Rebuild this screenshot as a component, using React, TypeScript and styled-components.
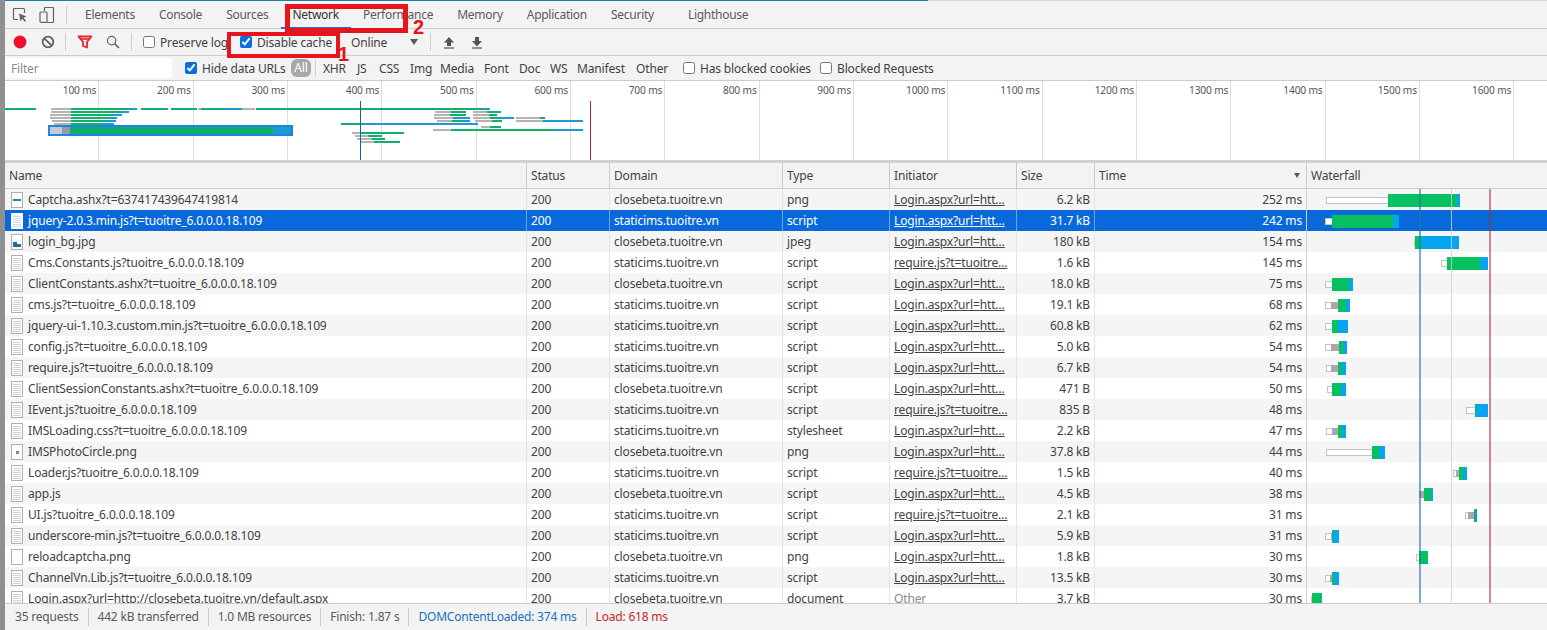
import React from "react";
import styled, { createGlobalStyle } from "styled-components";

const GlobalStyle = createGlobalStyle`
  html, body {
    margin: 0;
    padding: 0;
    height: 630px;
    overflow: hidden;
    background: #fff;
  }
  * {
    box-sizing: border-box;
  }
`;

const Page = styled.div`
  position: relative;
  width: 1547px;
  height: 630px;
  display: flex;
  flex-direction: column;
  overflow: hidden;
  background: #f3f3f3;
  border-left: 5px solid #909090;
  font-family: "Noto Sans", "Liberation Sans", sans-serif;
  font-size: 12px;
  letter-spacing: -0.16px;
  color: #3f4246;
`;

const TopLine = styled.div`
  height: 1px;
  margin-left: -5px;
  background: linear-gradient(to right, #1d7ea6 928px, #d8d8d8 928px);
`;

const TabBar = styled.div`
  height: 28px;
  display: flex;
  align-items: stretch;
  border-bottom: 1px solid #cccccc;
  padding-left: 2px;
`;

const IconSlot = styled.div<{ $w?: number; $l?: number }>`
  flex: 0 0 ${(p) => p.$w || 28}px;
  margin-left: ${(p) => p.$l || 0}px;
  display: flex;
  align-items: center;
  justify-content: center;
`;

const VDivider = styled.div<{ $h?: number; $l?: number; $r?: number }>`
  flex: 0 0 1px;
  align-self: center;
  height: ${(p) => p.$h || 18}px;
  background: #cfcfcf;
  margin-left: ${(p) => p.$l || 0}px;
  margin-right: ${(p) => p.$r || 0}px;
`;

const Tab = styled.div<{ $active?: boolean; $extra?: number }>`
  display: flex;
  align-items: center;
  padding: 1px 12px 0;
  margin-left: ${(p) => p.$extra || 0}px;
  letter-spacing: -0.27px;
  color: ${(p) => (p.$active ? "#333" : "#5a5a5a")};
  border-bottom: 2px solid ${(p) => (p.$active ? "#1a73e8" : "transparent")};
  margin-bottom: -1px;
`;

const Toolbar = styled.div`
  height: 27px;
  display: flex;
  align-items: center;
  border-bottom: 1px solid #cccccc;
  padding-left: 1px;
`;

const FilterBar = styled.div`
  height: 25px;
  display: flex;
  align-items: center;
  border-bottom: 1px solid #cccccc;
`;

const FilterInput = styled.div`
  flex: 0 0 167px;
  height: 20px;
  background: #fff;
  color: #8a8a8a;
  padding-left: 6px;
  line-height: 21px;
  margin-right: 13px;
`;

const Check = styled.input.attrs({ type: "checkbox", readOnly: true })`
  width: 12px;
  height: 12px;
  margin: 0 5px 0 0;
  accent-color: #0a6fdc;
  flex: none;
`;

const CheckLabel = styled.label<{ $w?: number }>`
  display: flex;
  align-items: center;
  white-space: nowrap;
  width: ${(p) => (p.$w ? `${p.$w}px` : "auto")};
`;

const AllPill = styled.span`
  background: #a8a8a8;
  color: #fff;
  border-radius: 6px;
  width: 20px;
  height: 18px;
  line-height: 18px;
  text-align: center;
  margin-left: 7px;
`;

const TypeButton = styled.span<{ $w: number }>`
  width: ${(p) => p.$w}px;
  white-space: nowrap;
`;

const Throttle = styled.div`
  width: 79px;
  margin-left: 20px;
  display: flex;
  align-items: center;
  justify-content: space-between;
  padding-right: 12px;
`;

const Caret = styled.span`
  width: 0;
  height: 0;
  border-left: 4px solid transparent;
  border-right: 4px solid transparent;
  border-top: 6px solid #5a5a5a;
`;

const Overview = styled.div`
  position: relative;
  height: 82px;
  display: flex;
  background: #fff;
  border-bottom: 3px solid #d0d0d0;
`;

const OverviewTick = styled.div`
  flex: 0 0 94.33px;
  height: 79px;
  border-right: 1px solid #dddddd;
  text-align: right;
  padding: 2px 2px 0 0;
  font-size: 10.2px;
  line-height: 15px;
  color: #555;
  white-space: nowrap;
`;

const OverviewChart = styled.svg`
  position: absolute;
  left: 0;
  top: 0;
`;

const COLUMNS = "522px 83px 173px 107px 127px 78px 212px 1fr";

const HeaderRow = styled.div`
  display: grid;
  grid-template-columns: ${COLUMNS};
  height: 26px;
  background: #f3f3f3;
  border-bottom: 1px solid #cccccc;
`;

const HeaderCell = styled.div`
  display: flex;
  align-items: center;
  justify-content: space-between;
  padding: 0 6px 0 4px;
  border-right: 1px solid #cccccc;
  white-space: nowrap;
  &:last-child {
    border-right: 0;
  }
`;

const SortCaret = styled(Caret)`
  border-left-width: 3.5px;
  border-right-width: 3.5px;
  border-top-width: 5px;
`;

const Table = styled.div`
  flex: 1;
  min-height: 0;
  overflow: hidden;
  background: #fff;
  border-bottom: 1px solid #cccccc;
`;

const Row = styled.div<{ $selected?: boolean; $striped?: boolean }>`
  display: grid;
  grid-template-columns: ${COLUMNS};
  height: 21px;
  line-height: 21px;
  background: ${(p) =>
    p.$selected ? "#0a69da" : p.$striped ? "#f5f5f5" : "#ffffff"};
  color: ${(p) => (p.$selected ? "#ffffff" : "#3f4246")};
`;

const Cell = styled.div<{ $right?: boolean; $selected?: boolean }>`
  padding: 0 4px;
  overflow: hidden;
  white-space: nowrap;
  text-overflow: ellipsis;
  text-align: ${(p) => (p.$right ? "right" : "left")};
  border-right: 1px solid ${(p) => (p.$selected ? "#ffffff66" : "#e4e4e4")};
`;

const NameCell = styled(Cell)`
  display: flex;
  align-items: center;
  gap: 5px;
  padding-left: 6px;
`;

const InitiatorLink = styled.span<{ $plain?: boolean }>`
  text-decoration: ${(p) => (p.$plain ? "none" : "underline")};
  color: ${(p) => (p.$plain ? "#8a8a8a" : "inherit")};
`;

const WaterfallCell = styled.div`
  border-left: 1px solid #d0d0d0;
  margin-left: -1px;
  height: 21px;
`;

const StatusBar = styled.div`
  flex: 0 0 26px;
  display: flex;
  align-items: center;
  padding-left: 1px;
  letter-spacing: -0.2px;
  color: #5a5a5a;
`;

const StatusItem = styled.span<{ $tone?: "blue" | "red" }>`
  padding: 0 9px;
  border-right: 1px solid #cccccc;
  line-height: 18px;
  color: ${(p) =>
    p.$tone === "blue" ? "#1a6fc0" : p.$tone === "red" ? "#c62828" : "inherit"};
  &:last-child {
    border-right: 0;
  }
`;

// the red marks someone drew on top of the screenshot
const MarkBox = styled.div<{ $x: number; $y: number; $w: number; $h: number; $t: number }>`
  position: absolute;
  left: ${(p) => p.$x - 5}px;
  top: ${(p) => p.$y}px;
  width: ${(p) => p.$w}px;
  height: ${(p) => p.$h}px;
  border: ${(p) => p.$t}px solid #e5141d;
`;

const MarkDigit = styled.span<{ $x: number; $y: number }>`
  position: absolute;
  left: ${(p) => p.$x - 5}px;
  top: ${(p) => p.$y}px;
  font-family: "Liberation Sans", sans-serif;
  font-weight: 700;
  font-size: 20px;
  line-height: 21px;
  letter-spacing: 0;
  color: #e5141d;
`;

const InspectIcon = () => (
  <svg width="16" height="16" viewBox="0 0 16 16">
    <path d="M6 12.5H2.5a1 1 0 0 1-1-1v-9a1 1 0 0 1 1-1h9a1 1 0 0 1 1 1V6" fill="none" stroke="#5f6368" strokeWidth="1.2" />
    <path d="M7 6.5l7.5 3-3 1.2 2.6 3-1.3 1.1-2.5-3-1.8 2.4z" fill="#5f6368" />
  </svg>
);

const DeviceIcon = () => (
  <svg width="16" height="16" viewBox="0 0 16 16">
    <path d="M5.5 4V1.5a1 1 0 0 1 1-1h7a1 1 0 0 1 1 1v13a1 1 0 0 1-1 1H8" fill="none" stroke="#5f6368" strokeWidth="1.2" />
    <rect x="1" y="5" width="7" height="10.4" rx="1" fill="none" stroke="#5f6368" strokeWidth="1.2" />
  </svg>
);

const RecordIcon = () => (
  <svg width="16" height="16" viewBox="0 0 16 16">
    <circle cx="8" cy="8" r="6.4" fill="#ef0f2c" />
  </svg>
);

const ClearIcon = () => (
  <svg width="14" height="14" viewBox="0 0 14 14">
    <circle cx="7" cy="7" r="5.3" fill="none" stroke="#5f6368" strokeWidth="1.8" />
    <path d="M3.3 3.3l7.4 7.4" stroke="#5f6368" strokeWidth="1.8" />
  </svg>
);

const FunnelIcon = () => (
  <svg width="16" height="14" viewBox="0 0 16 14">
    <path d="M1.5 1.5h13L10 7v5.5L6 11V7z" fill="none" stroke="#e8232f" strokeWidth="1.8" strokeLinejoin="round" />
    <path d="M4 4h8" stroke="#e8232f" strokeWidth="1.6" />
  </svg>
);

const SearchIcon = () => (
  <svg width="14" height="14" viewBox="0 0 14 14">
    <circle cx="5.6" cy="5.6" r="4.2" fill="none" stroke="#666" strokeWidth="1.2" />
    <path d="M8.6 8.6l4.4 4.4" stroke="#666" strokeWidth="1.6" />
  </svg>
);

const UploadIcon = () => (
  <svg width="12" height="13" viewBox="0 0 12 13">
    <path d="M6 1l5 5.5H8v3.5H4V6.5H1z" fill="#555" />
    <rect x="1" y="11.4" width="10" height="1.2" fill="#555" />
  </svg>
);

const DownloadIcon = () => (
  <svg width="12" height="13" viewBox="0 0 12 13">
    <path d="M4 1h4v4h3l-5 5.5L1 5h3z" fill="#555" />
    <rect x="1" y="11.4" width="10" height="1.2" fill="#555" />
  </svg>
);

type FileKind = "doc" | "captcha" | "image" | "blank" | "dot";

const FileIcon = ({ kind, selected }: { kind: FileKind; selected?: boolean }) => (
  <svg width="12" height="16" viewBox="0 0 12 16" shapeRendering="crispEdges" style={{ flex: "none" }}>
    <rect x="0.5" y="0.5" width="11" height="15" fill="#ffffff" stroke={selected ? "#ffffff" : "#b0b0b0"} />
    {kind === "doc" && (
      <path
        d="M2 3.5h8M2 5.5h8M2 7.5h8M2 9.5h8M2 11.5h8M2 13.5h8"
        stroke={selected ? "#d0dcec" : "#d2d2d2"}
        strokeWidth="1"
      />
    )}
    {kind === "captcha" && <rect x="2" y="7" width="8" height="2" fill="#1c8aa8" />}
    {kind === "image" && <path d="M2 13V8h4v2h4v3z" fill="#1c6f9c" />}
    {kind === "dot" && <rect x="5" y="7" width="3" height="3" fill="#58a868" />}
  </svg>
);

const ticks = [
  100, 200, 300, 400, 500, 600, 700, 800, 900, 1000, 1100, 1200, 1300, 1400, 1500, 1600,
];

const GRAY = "#b4b4b4";
const GREEN = "#10b06a";
const BLUE = "#1c9ad6";

// y, from, to, colour (page coordinates)
const overviewBars: [number, number, number, string][] = [
  [108, 5, 36, GREEN],
  [108, 51, 71, GRAY], [108, 71, 128, GREEN], [108, 128, 137, BLUE], [108, 141, 168, GREEN],
  [108, 171, 197, GREEN], [108, 198, 201, GRAY], [108, 201, 225, GREEN], [108, 225, 242, BLUE],
  [108, 242, 255, GRAY], [108, 256, 482, GREEN], [108, 482, 490, BLUE],
  [111, 51, 71, GRAY], [111, 71, 120, GREEN], [111, 120, 129, BLUE],
  [114, 50, 71, GRAY], [114, 71, 112, GREEN], [114, 112, 122, BLUE],
  [117, 50, 71, GRAY], [117, 71, 110, GREEN], [117, 110, 117, BLUE],
  [120, 52, 71, GRAY], [120, 71, 105, GREEN], [120, 105, 116, BLUE],
  [123, 54, 71, GRAY], [123, 71, 100, GREEN], [123, 100, 114, BLUE],
  [123, 341, 362, GREEN], [123, 362, 478, BLUE],
  [132, 352, 360, GRAY], [132, 360, 404, GREEN],
  [135, 355, 368, GRAY], [135, 368, 382, GREEN],
  [138, 357, 372, GRAY], [138, 372, 385, GREEN],
  [141, 360, 374, GRAY], [141, 374, 400, GREEN],
  [111, 435, 451, GRAY], [111, 451, 466, GREEN], [111, 473, 487, GRAY], [111, 487, 495, GREEN], [111, 495, 501, BLUE],
  [114, 434, 450, GRAY], [114, 450, 466, GREEN], [114, 473, 489, GRAY], [114, 489, 497, GREEN],
  [117, 434, 453, GRAY], [117, 453, 470, BLUE], [117, 473, 490, GRAY], [117, 490, 500, GREEN], [117, 500, 514, BLUE], [117, 516, 540, GRAY], [117, 540, 545, GREEN],
  [120, 437, 452, GRAY], [120, 452, 463, GREEN], [120, 463, 470, BLUE], [120, 475, 492, GRAY], [120, 492, 502, GREEN], [120, 516, 543, GRAY], [120, 543, 583, BLUE],
  [126, 481, 490, GRAY], [126, 490, 501, GREEN],
  [129, 433, 451, GRAY], [129, 451, 555, GREEN], [129, 555, 583, BLUE],
];

type Seg = [number, number, "q" | "s" | "g" | "b" | "t"];

interface Req {
  name: string;
  kind: FileKind;
  domain: "closebeta" | "staticims";
  type: string;
  initiator: string;
  size: string;
  time: string;
  bars: Seg[];
}

const LOGIN = "Login.aspx?url=htt…";
const REQUIRE = "require.js?t=tuoitre…";
const V = "tuoitre_6.0.0.0.18.109";

const requests: Req[] = [
  { name: "Captcha.ashx?t=637417439647419814", kind: "captcha", domain: "closebeta", type: "png", initiator: LOGIN, size: "6.2 kB", time: "252 ms", bars: [[1326, 1388, "q"], [1388, 1457, "g"], [1457, 1460, "b"]] },
  { name: `jquery-2.0.3.min.js?t=${V}`, kind: "doc", domain: "staticims", type: "script", initiator: LOGIN, size: "31.7 kB", time: "242 ms", bars: [[1325, 1332, "q"], [1332, 1393, "g"], [1393, 1399, "b"]] },
  { name: "login_bg.jpg", kind: "image", domain: "closebeta", type: "jpeg", initiator: LOGIN, size: "180 kB", time: "154 ms", bars: [[1414, 1415, "q"], [1415, 1421, "g"], [1421, 1459, "b"]] },
  { name: `Cms.Constants.js?${V}`, kind: "doc", domain: "staticims", type: "script", initiator: REQUIRE, size: "1.6 kB", time: "145 ms", bars: [[1441, 1447, "q"], [1447, 1480, "g"], [1480, 1488, "b"]] },
  { name: `ClientConstants.ashx?t=${V}`, kind: "doc", domain: "closebeta", type: "script", initiator: LOGIN, size: "18.0 kB", time: "75 ms", bars: [[1325, 1332, "q"], [1332, 1349, "g"], [1349, 1353, "b"]] },
  { name: `cms.js?t=${V}`, kind: "doc", domain: "staticims", type: "script", initiator: LOGIN, size: "19.1 kB", time: "68 ms", bars: [[1325, 1331, "q"], [1331, 1338, "s"], [1338, 1346, "g"], [1346, 1350, "b"]] },
  { name: `jquery-ui-1.10.3.custom.min.js?t=${V}`, kind: "doc", domain: "staticims", type: "script", initiator: LOGIN, size: "60.8 kB", time: "62 ms", bars: [[1325, 1332, "q"], [1332, 1338, "g"], [1338, 1348, "b"]] },
  { name: `config.js?t=${V}`, kind: "doc", domain: "staticims", type: "script", initiator: LOGIN, size: "5.0 kB", time: "54 ms", bars: [[1325, 1331, "q"], [1331, 1339, "s"], [1339, 1343, "g"], [1343, 1347, "b"]] },
  { name: `require.js?t=${V}`, kind: "doc", domain: "staticims", type: "script", initiator: LOGIN, size: "6.7 kB", time: "54 ms", bars: [[1326, 1331, "q"], [1331, 1338, "s"], [1338, 1342, "g"], [1342, 1346, "b"]] },
  { name: `ClientSessionConstants.ashx?t=${V}`, kind: "doc", domain: "closebeta", type: "script", initiator: LOGIN, size: "471 B", time: "50 ms", bars: [[1327, 1332, "q"], [1332, 1341, "g"], [1341, 1346, "b"]] },
  { name: `IEvent.js?${V}`, kind: "doc", domain: "staticims", type: "script", initiator: REQUIRE, size: "835 B", time: "48 ms", bars: [[1466, 1475, "q"], [1475, 1476, "g"], [1476, 1488, "b"]] },
  { name: `IMSLoading.css?t=${V}`, kind: "doc", domain: "staticims", type: "stylesheet", initiator: LOGIN, size: "2.2 kB", time: "47 ms", bars: [[1326, 1332, "q"], [1332, 1338, "s"], [1338, 1342, "g"], [1342, 1346, "b"]] },
  { name: "IMSPhotoCircle.png", kind: "dot", domain: "closebeta", type: "png", initiator: LOGIN, size: "37.8 kB", time: "44 ms", bars: [[1326, 1372, "q"], [1372, 1379, "g"], [1379, 1385, "b"]] },
  { name: `Loader.js?${V}`, kind: "doc", domain: "staticims", type: "script", initiator: REQUIRE, size: "1.5 kB", time: "40 ms", bars: [[1453, 1456, "q"], [1456, 1459, "s"], [1459, 1463, "g"], [1463, 1467, "b"]] },
  { name: "app.js", kind: "doc", domain: "closebeta", type: "script", initiator: LOGIN, size: "4.5 kB", time: "38 ms", bars: [[1419, 1424, "s"], [1424, 1431, "g"], [1431, 1433, "b"]] },
  { name: `UI.js?${V}`, kind: "doc", domain: "staticims", type: "script", initiator: REQUIRE, size: "2.1 kB", time: "31 ms", bars: [[1465, 1468, "q"], [1468, 1474, "s"], [1474, 1477, "t"]] },
  { name: `underscore-min.js?t=${V}`, kind: "doc", domain: "staticims", type: "script", initiator: LOGIN, size: "5.9 kB", time: "31 ms", bars: [[1325, 1331, "q"], [1331, 1332, "s"], [1332, 1333, "g"], [1333, 1339, "b"]] },
  { name: "reloadcaptcha.png", kind: "blank", domain: "closebeta", type: "png", initiator: LOGIN, size: "1.8 kB", time: "30 ms", bars: [[1416, 1419, "q"], [1419, 1428, "g"]] },
  { name: `ChannelVn.Lib.js?t=${V}`, kind: "doc", domain: "staticims", type: "script", initiator: LOGIN, size: "13.5 kB", time: "30 ms", bars: [[1325, 1330, "q"], [1330, 1332, "s"], [1332, 1334, "g"], [1334, 1339, "b"]] },
  { name: "Login.aspx?url=http://closebeta.tuoitre.vn/default.aspx", kind: "doc", domain: "closebeta", type: "document", initiator: "Other", size: "3.7 kB", time: "30 ms", bars: [[1311, 1312, "q"], [1312, 1322, "g"]] },
];

const segColor = { s: "#a8a8ac", g: "#07c160", b: "#05a5ef", t: "#0fa5a5" };

const WaterfallBars = ({ bars }: { bars: Seg[] }) => (
  <svg width="240" height="21" viewBox="1307 0 240 21" shapeRendering="crispEdges" style={{ display: "block" }}>
    {bars.map(([from, to, k]) =>
      k === "q" ? (
        <rect key={from} x={from + 0.5} y={8} width={to - from} height={6} fill="#ffffff" stroke="#c4c4c4" />
      ) : k === "s" ? (
        <rect key={from} x={from} y={8} width={to - from} height={7} fill={segColor.s} />
      ) : (
        <rect key={from} x={from} y={5} width={to - from} height={13} fill={segColor[k]} />
      )
    )}
    <rect x={1419} y={0} width={2} height={21} fill="#1a7aa8" opacity={0.6} />
    <rect x={1451} y={0} width={1} height={21} fill="#cfcfcf" opacity={0.8} />
    <rect x={1489} y={0} width={2} height={21} fill="#b02a2a" opacity={0.55} />
  </svg>
);

const App: React.FC = () => {
  return (
    <>
      <GlobalStyle />
      <Page>
        <TopLine />
        <TabBar>
          <IconSlot $w={26}>
            <InspectIcon />
          </IconSlot>
          <IconSlot $w={28}>
            <DeviceIcon />
          </IconSlot>
          <VDivider $l={5} $r={6} />
          {["Elements", "Console", "Sources"].map((t) => (
            <Tab key={t}>{t}</Tab>
          ))}
          <Tab $active>Network</Tab>
          {["Performance", "Memory", "Application", "Security"].map((t) => (
            <Tab key={t}>{t}</Tab>
          ))}
          <Tab $extra={10}>Lighthouse</Tab>
        </TabBar>
        <Toolbar>
          <IconSlot>
            <RecordIcon />
          </IconSlot>
          <IconSlot>
            <ClearIcon />
          </IconSlot>
          <VDivider $l={3} $r={5} />
          <IconSlot>
            <FunnelIcon />
          </IconSlot>
          <IconSlot>
            <SearchIcon />
          </IconSlot>
          <VDivider $l={4} $r={11} />
          <CheckLabel $w={97}>
            <Check />
            Preserve log
          </CheckLabel>
          <CheckLabel $w={91}>
            <Check checked />
            Disable cache
          </CheckLabel>
          <Throttle>
            Online
            <Caret />
          </Throttle>
          <VDivider $r={11} />
          <IconSlot $w={14}>
            <UploadIcon />
          </IconSlot>
          <IconSlot $w={14} $l={14}>
            <DownloadIcon />
          </IconSlot>
        </Toolbar>
        <FilterBar>
          <FilterInput>Filter</FilterInput>
          <CheckLabel $w={99}>
            <Check checked />
            Hide data URLs
          </CheckLabel>
          <AllPill>All</AllPill>
          <VDivider $h={16} $l={4} $r={7} />
          <TypeButton $w={34}>XHR</TypeButton>
          <TypeButton $w={22}>JS</TypeButton>
          <TypeButton $w={31}>CSS</TypeButton>
          <TypeButton $w={30}>Img</TypeButton>
          <TypeButton $w={44}>Media</TypeButton>
          <TypeButton $w={35}>Font</TypeButton>
          <TypeButton $w={31}>Doc</TypeButton>
          <TypeButton $w={27}>WS</TypeButton>
          <TypeButton $w={59}>Manifest</TypeButton>
          <TypeButton $w={47}>Other</TypeButton>
          <CheckLabel $w={137}>
            <Check />
            Has blocked cookies
          </CheckLabel>
          <CheckLabel>
            <Check />
            Blocked Requests
          </CheckLabel>
        </FilterBar>
        <Overview>
          {ticks.map((t) => (
            <OverviewTick key={t}>{t} ms</OverviewTick>
          ))}
          <OverviewChart width="1542" height="79" viewBox="5 81 1542 79" shapeRendering="crispEdges">
            {overviewBars.map(([y, from, to, c], i) => (
              <rect key={i} x={from} y={y} width={to - from} height={2} fill={c} />
            ))}
            <rect x={49} y={126} width={243} height={9} fill="#1c9ad6" stroke="#1b86dc" strokeWidth={2} />
            <rect x={50} y={127} width={12} height={7} fill="#c8c8d8" />
            <rect x={62} y={127} width={8} height={7} fill="#9a9aa8" />
            <rect x={70} y={127} width={203} height={7} fill="#0fae6e" />
            <rect x={360} y={101} width={1} height={59} fill="#1a5f9e" />
            <rect x={590} y={101} width={1} height={59} fill="#a82a2a" />
          </OverviewChart>
        </Overview>
        <HeaderRow>
          <HeaderCell>Name</HeaderCell>
          <HeaderCell>Status</HeaderCell>
          <HeaderCell>Domain</HeaderCell>
          <HeaderCell>Type</HeaderCell>
          <HeaderCell>Initiator</HeaderCell>
          <HeaderCell>Size</HeaderCell>
          <HeaderCell>
            Time
            <SortCaret />
          </HeaderCell>
          <HeaderCell>Waterfall</HeaderCell>
        </HeaderRow>
        <Table>
          {requests.map((r, i) => {
            const selected = i === 1;
            return (
              <Row key={r.name} $selected={selected} $striped={i % 2 === 0}>
                <NameCell $selected={selected}>
                  <FileIcon kind={r.kind} selected={selected} />
                  {r.name}
                </NameCell>
                <Cell $selected={selected}>200</Cell>
                <Cell $selected={selected}>{r.domain}.tuoitre.vn</Cell>
                <Cell $selected={selected}>{r.type}</Cell>
                <Cell $selected={selected}>
                  <InitiatorLink $plain={r.initiator === "Other"}>{r.initiator}</InitiatorLink>
                </Cell>
                <Cell $right $selected={selected}>
                  {r.size}
                </Cell>
                <Cell $right $selected={selected}>
                  {r.time}
                </Cell>
                <WaterfallCell>
                  <WaterfallBars bars={r.bars} />
                </WaterfallCell>
              </Row>
            );
          })}
        </Table>
        <StatusBar>
          <StatusItem>35 requests</StatusItem>
          <StatusItem>442 kB transferred</StatusItem>
          <StatusItem>1.0 MB resources</StatusItem>
          <StatusItem>Finish: 1.87 s</StatusItem>
          <StatusItem $tone="blue">DOMContentLoaded: 374 ms</StatusItem>
          <StatusItem $tone="red">Load: 618 ms</StatusItem>
        </StatusBar>
        <MarkBox $x={227} $y={32} $w={113} $h={26} $t={4} />
        <MarkBox $x={285} $y={4} $w={123} $h={29} $t={5} />
        <MarkDigit $x={338} $y={44}>1</MarkDigit>
        <MarkDigit $x={413} $y={17}>2</MarkDigit>
      </Page>
    </>
  );
};

export default App;
